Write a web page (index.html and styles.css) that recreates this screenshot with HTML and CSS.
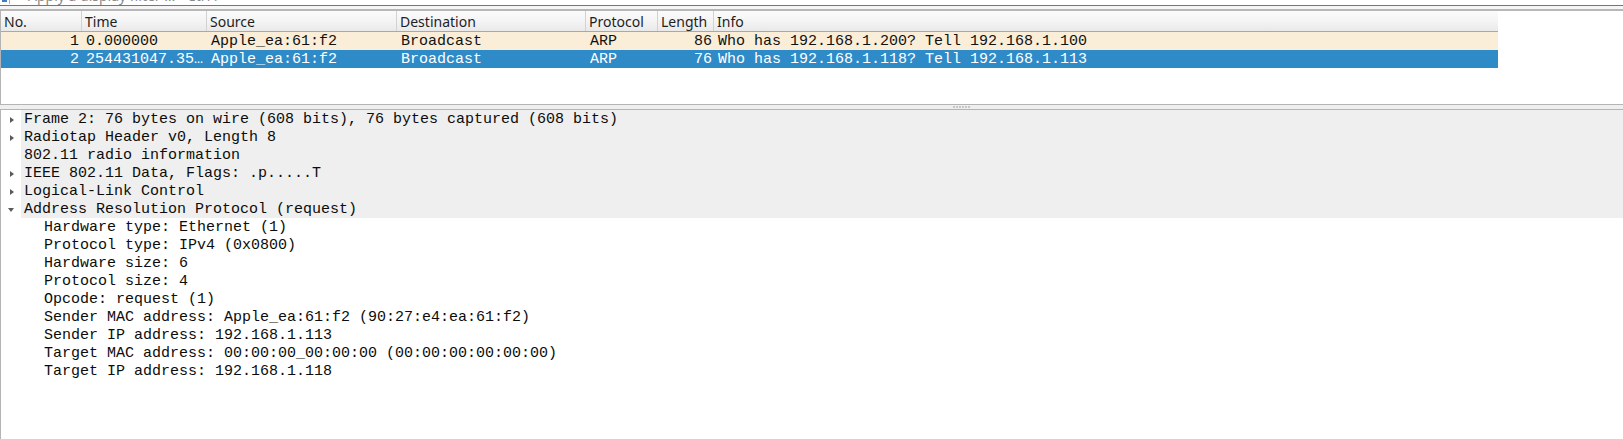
FILE: index.html
```html
<!DOCTYPE html>
<html>
<head>
<meta charset="utf-8">
<link rel="stylesheet" href="styles.css">
</head>
<body>
<div class="filter">
  <div class="filter-inner">
    <svg class="bm" width="6" height="14" viewBox="0 0 6 14"><rect x="0" y="2" width="5" height="12" fill="#3f7fc1"/><rect x="1" y="4" width="3" height="8" fill="#9cc3ea"/></svg>
    <span class="fsep"></span>
    <span class="ftext">Apply a display filter … &lt;Ctrl-/&gt;</span>
  </div>
</div>
<div class="gap"></div>
<div class="list">
  <div class="hdr">
    <div class="hc">No.</div>
    <div class="hc">Time</div>
    <div class="hc">Source</div>
    <div class="hc">Destination</div>
    <div class="hc">Protocol</div>
    <div class="hc">Length</div>
    <div class="hc last">Info</div>
  </div>
  <div class="row r1">
    <div class="c num">1</div>
    <div class="c">0.000000</div>
    <div class="c">Apple_ea:61:f2</div>
    <div class="c">Broadcast</div>
    <div class="c">ARP</div>
    <div class="c len">86</div>
    <div class="c">Who has 192.168.1.200? Tell 192.168.1.100</div>
  </div>
  <div class="row r2">
    <div class="c num">2</div>
    <div class="c">254431047.35…</div>
    <div class="c">Apple_ea:61:f2</div>
    <div class="c">Broadcast</div>
    <div class="c">ARP</div>
    <div class="c len">76</div>
    <div class="c">Who has 192.168.1.118? Tell 192.168.1.113</div>
  </div>
</div>
<div class="splitter"><div class="dots"><i></i><i></i><i></i><i></i><i></i><i></i></div></div>
<div class="details">
  <div class="top"><span class="arr right"></span><span class="t">Frame 2: 76 bytes on wire (608 bits), 76 bytes captured (608 bits)</span></div>
  <div class="top"><span class="arr right"></span><span class="t">Radiotap Header v0, Length 8</span></div>
  <div class="top"><span class="arr"></span><span class="t">802.11 radio information</span></div>
  <div class="top"><span class="arr right"></span><span class="t">IEEE 802.11 Data, Flags: .p.....T</span></div>
  <div class="top"><span class="arr right"></span><span class="t">Logical-Link Control</span></div>
  <div class="top"><span class="arr down"></span><span class="t">Address Resolution Protocol (request)</span></div>
  <div class="child">Hardware type: Ethernet (1)</div>
  <div class="child">Protocol type: IPv4 (0x0800)</div>
  <div class="child">Hardware size: 6</div>
  <div class="child">Protocol size: 4</div>
  <div class="child">Opcode: request (1)</div>
  <div class="child">Sender MAC address: Apple_ea:61:f2 (90:27:e4:ea:61:f2)</div>
  <div class="child">Sender IP address: 192.168.1.113</div>
  <div class="child">Target MAC address: 00:00:00_00:00:00 (00:00:00:00:00:00)</div>
  <div class="child">Target IP address: 192.168.1.118</div>
</div>
</body>
</html>
```
FILE: styles.css
```css
html, body {
  margin: 0;
  padding: 0;
  background: #ffffff;
  width: 1623px;
  height: 439px;
  overflow: hidden;
}

.filter {
  height: 5px;
  overflow: hidden;
  border-bottom: 1px solid #767676;
  background: #ffffff;
}
.filter-inner {
  margin-top: -14px;
  height: 18px;
  display: flex;
  align-items: center;
  padding-left: 2px;
}
.bm { display: block; }
.fsep {
  width: 1px;
  height: 18px;
  background: #b0b0b0;
  margin-left: 1px;
}
.ftext {
  margin-left: 18px;
  font-family: "Noto Sans", sans-serif;
  font-size: 14px;
  color: #8a8a8a;
  white-space: nowrap;
}

.gap {
  height: 3px;
  background: #f6f6f6;
}

.list {
  border-top: 2px solid #b7b7b7;
  border-left: 1px solid #b4b4b4;
  height: 93px;
}

.hdr {
  display: grid;
  grid-template-columns: 81px 125px 190px 189px 72px 56px 784px;
  height: 20px;
  border-bottom: 1px solid #a8a8a8;
  width: 1497px;
  background: linear-gradient(#fbfbfb, #f4f4f4 50%, #e9e9e9);
}
.hc {
  font-family: "Noto Sans", sans-serif;
  font-size: 14px;
  line-height: 20px;
  padding-top: 1px;
  box-sizing: border-box;
  height: 20px;
  color: #1e1e1e;
  padding-left: 3px;
  border-right: 1px solid #d2d2d2;
  white-space: nowrap;
}
.hc.last { border-right: none; }

.row {
  display: grid;
  grid-template-columns: 81px 125px 190px 189px 72px 56px 784px;
  height: 18px;
  width: 1497px;
  font-family: "Liberation Mono", monospace;
  font-size: 15px;
  line-height: 18px;
}
.r1 { background: #faeed8; color: #121212; }
.r2 { background: #2e8bc8; color: #ffffff; }
.c {
  padding-left: 4px;
  padding-top: 1px;
  height: 18px;
  box-sizing: border-box;
  white-space: nowrap;
}
.c.num { text-align: right; padding-left: 0; padding-right: 3px; }
.c.len { text-align: right; padding-left: 0; padding-right: 2px; }

.splitter {
  height: 4px;
  border-top: 1px solid #b4b4b4;
  border-bottom: 1px solid #b4b4b4;
  background: #efefef;
  display: flex;
  align-items: center;
  padding-left: 953px;
}
.dots { display: flex; gap: 1px; }
.dots i {
  display: block;
  width: 2px;
  height: 2px;
  background: #c6c6c6;
}

.details {
  border-left: 1px solid #b4b4b4;
  height: 329px;
  font-family: "Liberation Mono", monospace;
  font-size: 15px;
  line-height: 18px;
  color: #0c0c0c;
}
.top {
  display: flex;
  height: 18px;
}
.arr {
  width: 20px;
  flex: none;
  display: flex;
  align-items: center;
  justify-content: center;
  padding-top: 1px;
  box-sizing: border-box;
}
.arr.right::before {
  content: "";
  display: block;
  margin-left: 1px;
  border-left: 4px solid #5a5a5a;
  border-top: 3px solid transparent;
  border-bottom: 3px solid transparent;
}
.arr.down::before {
  content: "";
  display: block;
  margin-left: -1px;
  border-top: 4px solid #5a5a5a;
  border-left: 3px solid transparent;
  border-right: 3px solid transparent;
}
.t {
  flex: 1;
  background: #efefef;
  padding-left: 3px;
  padding-top: 1px;
  box-sizing: border-box;
  height: 18px;
  white-space: nowrap;
}
.child {
  height: 18px;
  padding-left: 43px;
  padding-top: 1px;
  box-sizing: border-box;
  white-space: nowrap;
}
```
